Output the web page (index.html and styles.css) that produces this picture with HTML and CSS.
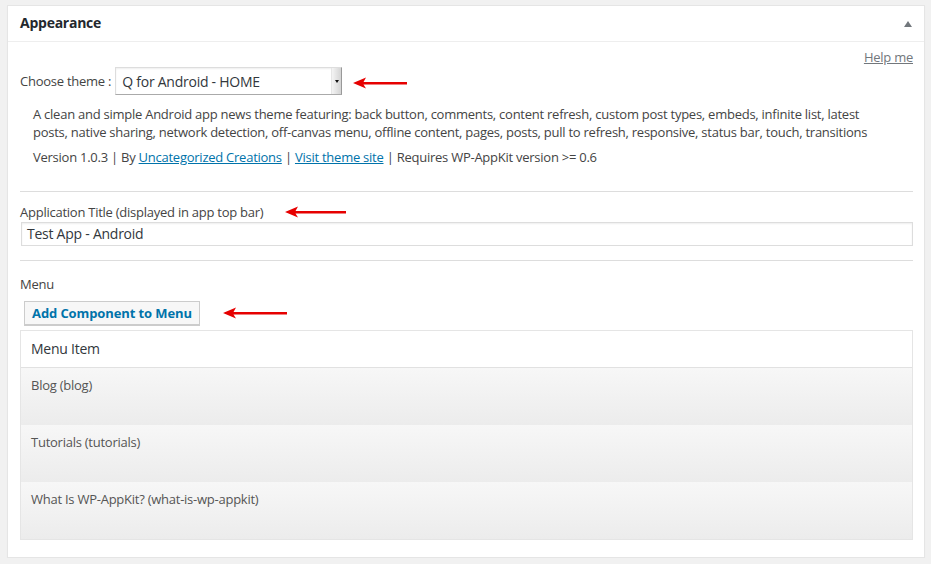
FILE: index.html
```html
<!DOCTYPE html>
<html>
<head>
<meta charset="utf-8">
<link rel="stylesheet" href="styles.css">
</head>
<body>
<div class="postbox">
  <div class="hndle">
    <h2 class="hndle-title">Appearance</h2>
    <span class="toggle"></span>
  </div>
  <div class="inside">
    <div class="help-row"><a class="help" href="#">Help me</a></div>
    <div class="theme-row">
      <span class="lbl">Choose theme :</span>
      <div class="select"><span class="select-val">Q for Android - HOME</span><span class="select-btn"><span class="caret"></span></span></div>
      <svg class="arrow arrow-1" width="54" height="12" viewBox="0 0 54 12"><path d="M0 6 L13 0.5 L10.5 5 L54 5 L54 7.5 L10.5 7.5 L13 11.5 Z" fill="#e60000"/></svg>
    </div>
    <div class="desc">
      <p class="desc-text">A clean and simple Android app news theme featuring: back button, comments, content refresh, custom post types, embeds, infinite list, latest posts, native sharing, network detection, off-canvas menu, offline content, pages, posts, pull to refresh, responsive, status bar, touch, transitions</p>
      <p class="desc-meta">Version 1.0.3 | By <a href="#">Uncategorized Creations</a> | <a href="#">Visit theme site</a> | Requires WP-AppKit version &gt;= 0.6</p>
    </div>
    <div class="sep sep-1"></div>
    <div class="field-label">Application Title (displayed in app top bar)<svg class="arrow arrow-2" width="61" height="12" viewBox="0 0 61 12"><path d="M0 6 L13 0.5 L10.5 5 L61 5 L61 7.5 L10.5 7.5 L13 11.5 Z" fill="#e60000"/></svg></div>
    <div class="input">Test App - Android</div>
    <div class="sep sep-2"></div>
    <div class="menu-label">Menu</div>
    <div class="btn-row">
      <button class="button">Add Component to Menu</button>
      <svg class="arrow arrow-3" width="64" height="12" viewBox="0 0 64 12"><path d="M0 6 L13 0.5 L10.5 5 L64 5 L64 7.5 L10.5 7.5 L13 11.5 Z" fill="#e60000"/></svg>
    </div>
    <div class="menu-table">
      <div class="menu-head">Menu Item</div>
      <div class="menu-item">Blog (blog)</div>
      <div class="menu-item">Tutorials (tutorials)</div>
      <div class="menu-item">What Is WP-AppKit? (what-is-wp-appkit)</div>
    </div>
  </div>
</div>
</body>
</html>
```
FILE: styles.css
```css
* { box-sizing: border-box; }
html, body { margin: 0; padding: 0; }
body {
  background: #f1f1f1;
  font-family: "Open Sans", "Noto Sans", sans-serif;
  font-size: 13px;
  letter-spacing: -0.25px;
  color: #444;
  padding: 5px 6px 0 7px;
}
.postbox {
  width: 918px;
  background: #fff;
  border: 1px solid #e5e5e5;
  box-shadow: 0 1px 1px rgba(0,0,0,0.04);
}
.hndle {
  height: 36px;
  border-bottom: 1px solid #eee;
  display: flex;
  align-items: center;
  justify-content: space-between;
  padding: 0 12px 2px 12px;
}
.hndle-title {
  margin: 0;
  font-size: 14px;
  font-weight: 700;
  color: #23282d;
  line-height: 20px;
}
.toggle {
  width: 0; height: 0;
  border-left: 4px solid transparent;
  border-right: 4px solid transparent;
  border-bottom: 6px solid #72777c;
  margin-right: 0;
  margin-top: 2px;
}
.inside {
  padding: 6px 11px 17px 12px;
  display: flex;
  flex-direction: column;
}
.help-row { display: flex; justify-content: flex-end; line-height: 18px; height: 18px; }
.help { color: #72777c; text-decoration: underline; }
.theme-row { display: flex; align-items: center; margin-top: 1px; height: 28px; }
.lbl { margin-right: 4px; }
.select {
  width: 227px; height: 28px;
  border: 1px solid #ddd;
  border-right-color: #999;
  border-bottom-color: #aaa;
  display: flex; align-items: center;
  justify-content: space-between;
  font-size: 14px; color: #32373c;
  padding-left: 6px;
  box-shadow: inset 0 1px 2px rgba(0,0,0,0.07);
}
.select-btn {
  width: 10px; height: 26px;
  background: linear-gradient(to right, #f4f4f4, #d4d4d4);
  border-left: 1px solid #e6e6e6;
  display: flex; justify-content: center; align-items: center;
}
.caret {
  width: 0; height: 0;
  border-left: 2px solid transparent;
  border-right: 2px solid transparent;
  border-top: 3px solid #111;
}
.arrow { display: inline-block; }
.arrow-1 { margin-left: 11px; margin-top: 4px; }
.desc { padding-left: 13px; margin-top: 10px; }
.desc p { margin: 0; line-height: 18px; }
.desc-text { max-width: 850px; }
.desc-meta { margin-top: 7px !important; }
.desc a { color: #0073aa; text-decoration: underline; }
.sep { border-top: 1px solid #ddd; }
.sep-1 { margin-top: 25px; }
.field-label { margin-top: 11px; line-height: 18px; display: flex; align-items: center; }
.arrow-2 { margin-left: 22px; }
.input {
  margin-top: 1px;
  margin-left: 1px;
  height: 24px;
  border: 1px solid #ddd;
  box-shadow: inset 0 1px 2px rgba(0,0,0,0.07);
  font-size: 14px;
  color: #32373c;
  padding-left: 5px;
  line-height: 22px;
}
.sep-2 { margin-top: 14px; }
.menu-label { margin-top: 14px; line-height: 18px; }
.btn-row { margin-top: 8px; display: flex; align-items: center; }
.button {
  margin-left: 4px;
  height: 24px;
  width: 176px;
  padding: 0;
  font-family: inherit;
  font-size: 13px;
  font-weight: 700;
  letter-spacing: -0.1px;
  color: #0073aa;
  background: #f7f7f7;
  border: 1px solid #ccc;
  box-shadow: 0 1px 0 #ccc;
  border-radius: 0;
}
.arrow-3 { margin-left: 23px; }
.menu-table {
  margin-top: 5px;
  width: 893px;
  border: 1px solid #e5e5e5;
}
.menu-head {
  height: 37px;
  border-bottom: 1px solid #e1e1e1;
  padding-left: 10px;
  font-size: 14px;
  color: #32373c;
  line-height: 35px;
}
.menu-item {
  height: 57px;
  padding: 8px 10px 0;
  line-height: 18px;
  color: #555;
  background: linear-gradient(to bottom, #f7f7f7, #ececec);
}
```
